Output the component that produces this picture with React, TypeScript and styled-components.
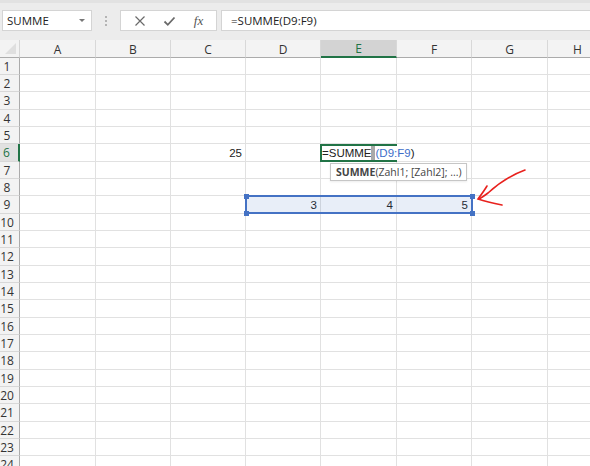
import React from "react";
import styled, { createGlobalStyle } from "styled-components";

const GlobalStyle = createGlobalStyle`
  html, body { margin: 0; padding: 0; background: #fff; overflow: hidden; }
  * { box-sizing: border-box; }
`;

const COLS = ["A", "B", "C", "D", "E", "F", "G", "H"];
const COL_WIDTHS = [76, 75, 75, 75, 76, 75, 76, 60];
const ROW_COUNT = 24;
const rowHeight = (i: number) => (i % 3 === 2 ? 18 : 17);

const values: Record<string, string> = {
  C6: "25",
  D9: "3",
  E9: "4",
  F9: "5",
};

const Window = styled.div`
  width: 590px;
  height: 466px;
  overflow: hidden;
  background: #fff;
  font-family: "Open Sans", "Noto Sans", sans-serif;
`;

const FormulaBar = styled.div`
  height: 40px;
  background: #ececec;
  border-top: 3px solid #e2e2e2;
  display: flex;
  align-items: flex-start;
  padding: 7px 0 0 2px;
`;

const NameBox = styled.div`
  width: 90px;
  height: 21px;
  background: #fff;
  border: 1px solid #d4d4d4;
  display: flex;
  align-items: center;
  justify-content: space-between;
  padding: 0 6px 0 4px;
  font-size: 11.5px;
  color: #222;
`;

const Caret = styled.span`
  width: 0;
  height: 0;
  border-left: 3px solid transparent;
  border-right: 3px solid transparent;
  border-top: 3px solid #777;
`;

const Grip = styled.div`
  width: 28px;
  height: 21px;
  display: flex;
  flex-direction: column;
  align-items: center;
  justify-content: center;
  gap: 2px;
  span {
    width: 2px;
    height: 2px;
    background: #b4b4b4;
  }
`;

const Controls = styled.div`
  width: 97px;
  height: 21px;
  background: #fff;
  border: 1px solid #d4d4d4;
  display: flex;
  align-items: center;
  justify-content: space-around;
  padding: 0 4px;
  color: #6a6a6a;
`;

const Fx = styled.span`
  font-family: "Liberation Serif", "DejaVu Serif", serif;
  font-style: italic;
  font-size: 13px;
  color: #555;
`;

const FormulaInput = styled.div`
  flex: 1;
  margin-left: 4px;
  height: 21px;
  background: #fff;
  border: 1px solid #d4d4d4;
  border-right: none;
  display: flex;
  align-items: center;
  padding-left: 9px;
  font-family: "Open Sans", sans-serif;
  font-size: 11.5px;
  color: #222;
`;

const Sheet = styled.div`
  position: relative;
  display: grid;
  grid-template-columns: 20px ${COL_WIDTHS.map((w) => w + "px").join(" ")};
  grid-template-rows: 18px ${Array.from({ length: ROW_COUNT }, (_, i) => rowHeight(i) + "px").join(" ")};
`;

const Corner = styled.div`
  background: #f3f3f3;
  border-right: 1px solid #d6d6d6;
  border-bottom: 1px solid #ababab;
  position: relative;
  &::after {
    content: "";
    position: absolute;
    right: 3px;
    bottom: 3px;
    border-left: 11px solid transparent;
    border-bottom: 11px solid #dfdfdf;
  }
`;

const ColHeader = styled.div<{ $active?: boolean }>`
  background: ${(p) => (p.$active ? "#d3d3d3" : "#f3f3f3")};
  border-right: 1px solid #d8d8d8;
  border-bottom: ${(p) => (p.$active ? "2px solid #217346" : "1px solid #ababab")};
  display: flex;
  align-items: center;
  justify-content: center;
  font-size: 12px;
  color: ${(p) => (p.$active ? "#217346" : "#333")};
  padding-top: 1px;
`;

const RowHeader = styled.div<{ $active?: boolean }>`
  background: ${(p) => (p.$active ? "#e1e1e1" : "#f3f3f3")};
  border-right: ${(p) => (p.$active ? "2px solid #217346" : "1px solid #ababab")};
  border-bottom: 1px solid #d8d8d8;
  display: flex;
  align-items: center;
  justify-content: center;
  padding-right: 5px;
  font-size: 12px;
  color: ${(p) => (p.$active ? "#217346" : "#333")};
`;

const Cell = styled.div`
  border-right: 1px solid #e1e1e1;
  border-bottom: 1px solid #e1e1e1;
  display: flex;
  align-items: center;
  justify-content: flex-end;
  padding-right: 3px;
  font-family: "Liberation Sans", Arial, sans-serif;
  font-size: 11.5px;
  color: #222;
`;

const ActiveCell = styled.div`
  position: absolute;
  left: 320px;
  top: 104px;
  width: 77px;
  height: 18px;
  border: 2px solid #217346;
`;

const Editor = styled.div`
  position: absolute;
  left: 322px;
  top: 106px;
  height: 14px;
  padding-right: 2px;
  background: #fff;
  display: flex;
  align-items: center;
  font-family: "Liberation Sans", Arial, sans-serif;
  font-size: 11.5px;
  color: #222;
  white-space: nowrap;
`;

const Ref = styled.span`
  color: #3d6ec9;
`;

const Cursor = styled.span`
  display: inline-block;
  width: 4px;
  height: 14px;
  background: #a9a9a9;
  margin: 0 1px 0 -1px;
`;

const Tooltip = styled.div`
  position: absolute;
  left: 330px;
  top: 123px;
  width: 137px;
  height: 18px;
  background: #fff;
  border: 1px solid #c6c6c6;
  box-shadow: 0 1px 2px rgba(0, 0, 0, 0.08);
  display: flex;
  align-items: center;
  padding-left: 5px;
  font-size: 10.5px;
  color: #444;
  white-space: nowrap;
  b {
    font-weight: 700;
    color: #444;
  }
`;

const Range = styled.div`
  position: absolute;
  left: 245px;
  top: 155px;
  width: 228px;
  height: 19px;
  border: 2px solid #4472c4;
  background: rgba(68, 114, 196, 0.12);
`;

const Handle = styled.span<{ $x: "l" | "r"; $y: "t" | "b" }>`
  position: absolute;
  width: 5px;
  height: 5px;
  background: #4472c4;
  ${(p) => (p.$x === "l" ? "left: -3.5px;" : "right: -3.5px;")}
  ${(p) => (p.$y === "t" ? "top: -3.5px;" : "bottom: -3.5px;")}
`;

const Arrow = styled.svg`
  position: absolute;
  left: 470px;
  top: 120px;
  overflow: visible;
`;

const XIcon = () => (
  <svg width="12" height="12" viewBox="0 0 12 12">
    <path d="M1.5 1.5 L10.5 10.5 M10.5 1.5 L1.5 10.5" stroke="#6a6a6a" strokeWidth="1.2" fill="none" />
  </svg>
);

const CheckIcon = () => (
  <svg width="13" height="12" viewBox="0 0 13 12">
    <path d="M1.5 6.5 L4.8 9.8 L11.5 2.5" stroke="#6a6a6a" strokeWidth="1.8" fill="none" />
  </svg>
);

export default function App() {
  return (
    <Window>
      <GlobalStyle />
      <FormulaBar>
        <NameBox>
          SUMME
          <Caret />
        </NameBox>
        <Grip>
          <span />
          <span />
          <span />
        </Grip>
        <Controls>
          <XIcon />
          <CheckIcon />
          <Fx>fx</Fx>
        </Controls>
        <FormulaInput>=SUMME(D9:F9)</FormulaInput>
      </FormulaBar>

      <Sheet>
        <Corner />
        {COLS.map((c) => (
          <ColHeader key={c} $active={c === "E"}>
            {c}
          </ColHeader>
        ))}
        {Array.from({ length: ROW_COUNT }, (_, i) => {
          const row = i + 1;
          return (
            <React.Fragment key={row}>
              <RowHeader $active={row === 6}>{row}</RowHeader>
              {COLS.map((c) => (
                <Cell key={c + row}>{values[c + row]}</Cell>
              ))}
            </React.Fragment>
          );
        })}

        <Range>
          <Handle $x="l" $y="t" />
          <Handle $x="r" $y="t" />
          <Handle $x="l" $y="b" />
          <Handle $x="r" $y="b" />
        </Range>

        <ActiveCell />
        <Editor>
          =SUMME
          <Cursor />
          <Ref>(D9:F9</Ref>)
        </Editor>

        <Tooltip>
          <b>SUMME</b>(Zahl1; [Zahl2]; ...)
        </Tooltip>

        <Arrow width="60" height="50" viewBox="0 0 60 50">
          <path
            d="M55 10 C44 14 30 22 18 33 C14 36 11 38 9 39"
            stroke="#e8211d"
            strokeWidth="1.6"
            fill="none"
            strokeLinecap="round"
          />
          <path
            d="M17 26 C14 31 11 35 8 39 C14 41 22 43 32 45"
            stroke="#e8211d"
            strokeWidth="1.6"
            fill="none"
            strokeLinecap="round"
          />
        </Arrow>
      </Sheet>
    </Window>
  );
}
